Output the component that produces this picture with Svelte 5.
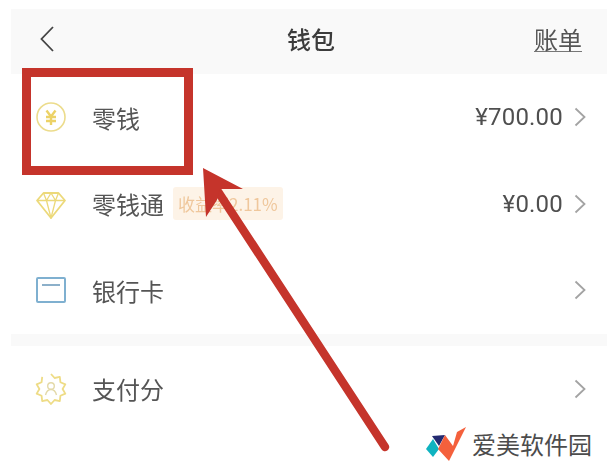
<script lang="ts">
	type Row = { label: string; icon: string; value?: string; tag?: string };

	const firstGroup: Row[] = [
		{ label: '零钱', icon: 'coin', value: '¥700.00' },
		{ label: '零钱通', icon: 'gem', value: '¥0.00', tag: '收益率2.11%' },
		{ label: '银行卡', icon: 'card' }
	];
	const secondGroup: Row[] = [{ label: '支付分', icon: 'badge' }];

	const badgePoints: string[] = [];
	for (let i = 0; i < 19; i++) {
		const angle = (i / 20) * Math.PI * 2 - Math.PI / 2;
		const r = i % 2 === 0 ? 15 : 11.6;
		badgePoints.push(`${(16 + r * Math.cos(angle)).toFixed(1)},${(16 + r * Math.sin(angle)).toFixed(1)}`);
	}
	const badgeOutline = badgePoints.slice(0, 19).join(' ');
</script>

{#snippet rowItem(row: Row)}
	<div class="row">
		<svg class="icon" viewBox="0 0 32 32" fill="none" stroke-linejoin="round">
			{#if row.icon === 'coin'}
				<circle cx="16" cy="16" r="14" stroke="#ecdc8c" stroke-width="1.6" />
				<path d="M11.500 9.500 16 15.500 20.500 9.500M11 16h10M11 20h10M16 15.500V24" stroke="#ecd266" stroke-width="2.400" />
			{:else if row.icon === 'gem'}
				<path d="M8.500 5h15l6.500 7.500L16 30 2 12.500Z" stroke="#ecd97a" stroke-width="1.800" />
				<path d="M2 12.500h28M11.500 12.500 16 30l4.500-17.500M8.500 5l3 7.500L16 5l4.500 7.500 3-7.500" stroke="#ecd97a" stroke-width="1.300" />
			{:else if row.icon === 'card'}
				<rect x="2" y="4" width="28" height="24" rx="1" stroke="#7fb0d0" stroke-width="2" />
				<path d="M7 11h18" stroke="#7fa8c4" stroke-width="1.800" />
			{:else}
				<polyline points={badgeOutline} stroke="#eedc86" stroke-width="1.800" />
				<circle cx="16" cy="13" r="3.300" stroke="#e3d9a8" stroke-width="1.400" />
				<path d="M10.500 22c1-4 3-5.500 5.500-5.500s4.500 1.500 5.500 5.500" stroke="#e3d9a8" stroke-width="1.400" />
			{/if}
		</svg>
		<span class="label">{row.label}</span>
		{#if row.tag}
			<span class="tag">{row.tag}</span>
		{/if}
		<span class="spacer"></span>
		{#if row.value}
			<span class="value">{row.value}</span>
		{/if}
		<svg class="chevron" viewBox="0 0 12 20" fill="none">
			<path d="M1.500 1.500 10.500 10 1.500 18.500" stroke="#a3a3a3" stroke-width="1.800" />
		</svg>
	</div>
{/snippet}

<div class="screen">
	<div class="page">
		<header class="topbar">
			<svg class="back" viewBox="0 0 14 26" fill="none">
				<path d="M13 1 1.500 13 13 25" stroke="#444" stroke-width="1.800" />
			</svg>
			<h1>钱包</h1>
			<span class="bill">账单</span>
		</header>

		<section class="group">
			{#each firstGroup as row}
				{@render rowItem(row)}
			{/each}
		</section>
		<section class="group">
			{#each secondGroup as row}
				{@render rowItem(row)}
			{/each}
		</section>
	</div>

	<div class="highlight"></div>
	<svg class="arrow" viewBox="0 0 609 469" fill="none">
		<path d="M217 190 385 447" stroke="#c5342b" stroke-width="8.500" stroke-linecap="round" />
		<path d="M203 168 243 189 220 189 217 200 206 217Z" fill="#c5342b" />
	</svg>

	<div class="watermark">
		<svg class="logo" viewBox="0 0 40 34">
			<path d="M0 22 7 12 13 22 7 30Z" fill="#0fb3c0" />
			<path d="M6 9 19 8 13 19Z" fill="#232a70" />
			<path d="M12 22 19 8 27 19 31 5 40 0 23 34Z" fill="#f4603c" />
		</svg>
		<span>爱美软件园</span>
	</div>
</div>

<style>
	:global(body) {
		background: #fff;
	}

	.screen {
		position: relative;
		width: 609px;
		height: 469px;
		overflow: hidden;
		background: #fff;
		font-family: 'Noto Sans CJK SC', 'Liberation Sans', sans-serif;
		color: #4a4a4a;
	}

	.page {
		display: flex;
		flex-direction: column;
		padding: 9px 2px 0 11px;
		filter: blur(0.5px);
	}

	.topbar {
		display: grid;
		grid-template-columns: 1fr auto 1fr;
		align-items: center;
		box-sizing: border-box;
		height: 65px;
		padding: 0 25px 5px 29px;
		background: #f9f9f9;
	}

	.back {
		width: 14px;
		height: 26px;
	}

	h1 {
		margin: 0;
		font-size: 24px;
		font-weight: 500;
		line-height: 30px;
		color: #3c3c3c;
	}

	.bill {
		justify-self: end;
		font-size: 24px;
		line-height: 24px;
		color: #555;
		border-bottom: 1px solid #777;
	}

	.group + .group {
		border-top: 12px solid #f9f9f9;
	}

	.row {
		display: flex;
		align-items: center;
		height: 86.500px;
		padding: 0 21px 0 24px;
		background: #fff;
		font-size: 24px;
	}

	.icon {
		width: 32px;
		height: 32px;
		flex: none;
	}

	.label {
		margin-left: 25px;
		color: #555;
	}

	.tag {
		margin-left: 9px;
		padding: 0 5px;
		height: 33px;
		line-height: 33px;
		font-size: 17px;
		background: #fdf3e7;
		color: #efc79c;
		border-radius: 3px;
	}

	.spacer {
		flex: 1;
	}

	.value {
		font-family: Roboto, 'Liberation Sans', sans-serif;
		font-size: 24px;
		letter-spacing: 0.2px;
		color: #4f4f4f;
		margin-right: 11px;
	}

	.chevron {
		width: 12px;
		height: 20px;
		flex: none;
	}

	.highlight {
		position: absolute;
		left: 22px;
		top: 68px;
		width: 171px;
		height: 107px;
		box-sizing: border-box;
		border: 9px solid #c5342b;
	}

	.arrow {
		position: absolute;
		inset: 0;
		width: 609px;
		height: 469px;
	}

	.watermark {
		position: absolute;
		left: 426px;
		top: 427px;
		display: flex;
		align-items: center;
		gap: 6px;
		font-size: 24px;
		line-height: 34px;
		color: #4c4c4c;
	}

	.logo {
		width: 40px;
		height: 34px;
	}
</style>
